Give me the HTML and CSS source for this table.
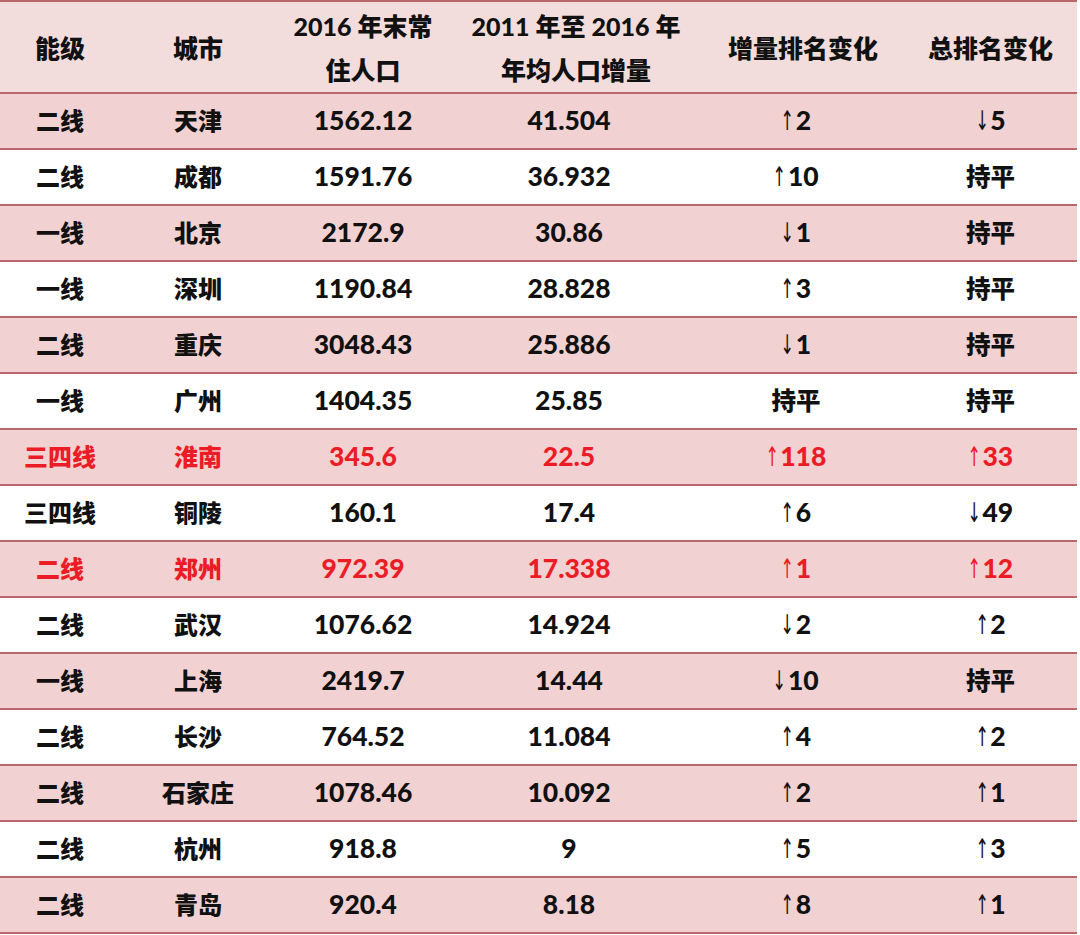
FILE: index.html
```html
<!DOCTYPE html>
<html lang="zh">
<head>
<meta charset="utf-8">
<link rel="stylesheet" href="styles.css">
</head>
<body>
<table class="data">
  <colgroup>
    <col class="c1"><col class="c2"><col class="c3"><col class="c4"><col class="c5"><col class="c6">
  </colgroup>
  <thead>
    <tr>
      <th>能级</th>
      <th>城市</th>
      <th>2016 年末常<br>住人口</th>
      <th class="shift">2011 年至 2016 年<br>年均人口增量</th>
      <th class="shift">增量排名变化</th>
      <th>总排名变化</th>
    </tr>
  </thead>
  <tbody>
    <tr class="alt"><td>二线</td><td>天津</td><td>1562.12</td><td>41.504</td><td><span class="ar">↑</span>2</td><td><span class="ar">↓</span>5</td></tr>
    <tr><td>二线</td><td>成都</td><td>1591.76</td><td>36.932</td><td><span class="ar">↑</span>10</td><td class="cn">持平</td></tr>
    <tr class="alt"><td>一线</td><td>北京</td><td>2172.9</td><td>30.86</td><td><span class="ar">↓</span>1</td><td class="cn">持平</td></tr>
    <tr><td>一线</td><td>深圳</td><td>1190.84</td><td>28.828</td><td><span class="ar">↑</span>3</td><td class="cn">持平</td></tr>
    <tr class="alt"><td>二线</td><td>重庆</td><td>3048.43</td><td>25.886</td><td><span class="ar">↓</span>1</td><td class="cn">持平</td></tr>
    <tr><td>一线</td><td>广州</td><td>1404.35</td><td>25.85</td><td class="cn">持平</td><td class="cn">持平</td></tr>
    <tr class="alt red"><td>三四线</td><td>淮南</td><td>345.6</td><td>22.5</td><td><span class="ar">↑</span>118</td><td><span class="ar">↑</span>33</td></tr>
    <tr><td>三四线</td><td>铜陵</td><td>160.1</td><td>17.4</td><td><span class="ar">↑</span>6</td><td><span class="ar">↓</span>49</td></tr>
    <tr class="alt red"><td>二线</td><td>郑州</td><td>972.39</td><td>17.338</td><td><span class="ar">↑</span>1</td><td><span class="ar">↑</span>12</td></tr>
    <tr><td>二线</td><td>武汉</td><td>1076.62</td><td>14.924</td><td><span class="ar">↓</span>2</td><td><span class="ar">↑</span>2</td></tr>
    <tr class="alt"><td>一线</td><td>上海</td><td>2419.7</td><td>14.44</td><td><span class="ar">↓</span>10</td><td class="cn">持平</td></tr>
    <tr><td>二线</td><td>长沙</td><td>764.52</td><td>11.084</td><td><span class="ar">↑</span>4</td><td><span class="ar">↑</span>2</td></tr>
    <tr class="alt"><td>二线</td><td>石家庄</td><td>1078.46</td><td>10.092</td><td><span class="ar">↑</span>2</td><td><span class="ar">↑</span>1</td></tr>
    <tr><td>二线</td><td>杭州</td><td>918.8</td><td>9</td><td><span class="ar">↑</span>5</td><td><span class="ar">↑</span>3</td></tr>
    <tr class="alt"><td>二线</td><td>青岛</td><td>920.4</td><td>8.18</td><td><span class="ar">↑</span>8</td><td><span class="ar">↑</span>1</td></tr>
  </tbody>
</table>
</body>
</html>
```

FILE: styles.css
```css
html, body {
  margin: 0;
  padding: 0;
  background: #ffffff;
}

.data {
  width: 1077px;
  margin-top: 0;
  border-collapse: collapse;
  table-layout: fixed;
  font-family: Lato, "Noto Sans CJK SC", sans-serif;
  font-weight: 900;
  color: #111111;
}

.c1 { width: 120px; }
.c2 { width: 156px; }
.c3 { width: 174px; }
.c4 { width: 238px; }
.c5 { width: 216px; }
.c6 { width: 173px; }

.data th {
  height: 86px;
  padding: 2px 0 0 0;
  background: #f2dcdc;
  border-top: 2px solid #b9676a;
  font-size: 25px;
  line-height: 44px;
  font-weight: 900;
  text-align: center;
  vertical-align: middle;
}

.data th.shift {
  padding-left: 14px;
}

.data td {
  height: 51px;
  padding: 0 0 3px 0;
  border-top: 2px solid #b9676a;
  font-size: 24px;
  text-align: center;
  vertical-align: middle;
}

.data td:nth-child(n+3) {
  font-size: 26.5px;
}

.data td.cn {
  font-size: 24.5px;
}

.data tbody tr:last-child td {
  border-bottom: 2px solid #b9676a;
}

.data tr.alt td {
  background: #f1d1d2;
}

.data tr.red td {
  color: #ec1c27;
}

.ar {
  font-family: "DejaVu Sans", sans-serif;
  font-weight: 400;
  font-size: 27px;
  display: inline-block;
  transform: scaleX(0.6);
  margin: 0 -3px 0 -5px;
}
```
